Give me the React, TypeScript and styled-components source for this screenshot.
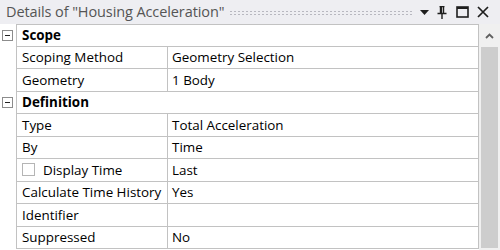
import React from "react";
import styled, { createGlobalStyle } from "styled-components";

const Global = createGlobalStyle`
  html, body { margin: 0; padding: 0; background: #ffffff; }
  body { font-family: "Open Sans", "Liberation Sans", sans-serif; }
`;

const Panel = styled.div`
  width: 500px;
  height: 250px;
  display: flex;
  flex-direction: column;
  background: #ffffff;
  overflow: hidden;
`;

const TitleBar = styled.div`
  height: 24px;
  flex: none;
  display: flex;
  align-items: center;
  background: #eeeef2;
  padding: 0 10px 0 6px;
  gap: 3px;
`;

const Title = styled.span`
  font-size: 14.5px;
  color: #555555;
  white-space: nowrap;
  letter-spacing: -0.1px;
  margin-top: -1px;
`;

const Grip = styled.div`
  flex: 1;
  height: 5px;
  margin: 0 3px 0 2px;
  background-image: radial-gradient(circle, #b8b8c0 0.7px, transparent 0.8px);
  background-size: 4px 3px;
`;

const TitleIcons = styled.div`
  display: flex;
  align-items: center;
  gap: 7px;
`;

const IconBox = styled.div<{ $w: number }>`
  width: ${(p) => p.$w}px;
  height: 14px;
  display: flex;
  align-items: center;
  justify-content: center;
`;

const Body = styled.div`
  flex: 1;
  display: flex;
  min-height: 0;
`;

const Table = styled.div`
  width: 479px;
  display: flex;
  flex-direction: column;
`;

const Row = styled.div`
  display: grid;
  grid-template-columns: 16px 151px 1fr;
  height: 22.5px;
`;

const Gutter = styled.div`
  display: flex;
  align-items: center;
  justify-content: center;
  padding-right: 1px;
`;

const Toggle = styled.div`
  width: 9px;
  height: 9px;
  border: 1px solid #8c8c8c;
  background: #ffffff;
  position: relative;
  &::after {
    content: "";
    position: absolute;
    left: 2px;
    right: 2px;
    top: 4px;
    height: 1px;
    background: #222;
  }
`;

const Cell = styled.div<{ $span?: boolean; $first?: boolean; $top?: boolean }>`
  grid-column: ${(p) => (p.$span ? "2 / 4" : "auto")};
  display: flex;
  align-items: center;
  gap: 8px;
  box-sizing: border-box;
  border-bottom: 1px solid #c2c2c2;
  border-top: ${(p) => (p.$top ? "1px solid #c2c2c2" : "none")};
  border-left: 1px solid #c2c2c2;
  border-right: ${(p) => (p.$first ? "none" : "1px solid #c2c2c2")};
  padding-left: ${(p) => (p.$first || p.$span ? "5px" : "4px")};
  font-size: 13.4px;
  font-weight: ${(p) => (p.$span ? 700 : 400)};
  color: #000;
  white-space: nowrap;
  overflow: hidden;
`;

const Check = styled.span`
  width: 13px;
  height: 13px;
  box-sizing: border-box;
  border: 1px solid #b5b5b5;
  background: #fff;
  flex: none;
`;

const Scrollbar = styled.div`
  width: 21px;
  background: #f0f0f0;
  display: flex;
  flex-direction: column;
  align-items: center;
`;

const ArrowBtn = styled.div`
  height: 23px;
  width: 100%;
  display: flex;
  align-items: center;
  justify-content: center;
`;

const Thumb = styled.div`
  width: 17px;
  flex: 1;
  background: #cdcdcd;
  margin-bottom: 2px;
`;

type Item =
  | { kind: "header"; label: string }
  | { kind: "prop"; name: string; value: string; check?: boolean };

const items: Item[] = [
  { kind: "header", label: "Scope" },
  { kind: "prop", name: "Scoping Method", value: "Geometry Selection" },
  { kind: "prop", name: "Geometry", value: "1 Body" },
  { kind: "header", label: "Definition" },
  { kind: "prop", name: "Type", value: "Total Acceleration" },
  { kind: "prop", name: "By", value: "Time" },
  { kind: "prop", name: "Display Time", value: "Last", check: true },
  { kind: "prop", name: "Calculate Time History", value: "Yes" },
  { kind: "prop", name: "Identifier", value: "" },
  { kind: "prop", name: "Suppressed", value: "No" },
];

export default function App() {
  return (
    <>
      <Global />
      <Panel>
        <TitleBar>
          <Title>Details of "Housing Acceleration"</Title>
          <Grip />
          <TitleIcons>
            <IconBox $w={10}>
              <svg width="9" height="5" viewBox="0 0 9 5">
                <path d="M0 0 H9 L4.5 5 Z" fill="#1e1e1e" />
              </svg>
            </IconBox>
            <IconBox $w={12}>
              <svg width="10" height="13" viewBox="0 0 10 13">
                <path
                  d="M2.5 0.5 H7.5 M3.5 0.5 V7 M6.5 0.5 V7 M0.5 7.5 H9.5 M5 7.5 V13"
                  stroke="#1e1e1e"
                  strokeWidth="1.4"
                  fill="none"
                />
                <rect x="3.5" y="1" width="1.6" height="6" fill="#1e1e1e" />
              </svg>
            </IconBox>
            <IconBox $w={14}>
              <svg width="13" height="12" viewBox="0 0 13 12">
                <rect x="1" y="1" width="11" height="10" stroke="#1e1e1e" strokeWidth="1.6" fill="none" />
                <rect x="1" y="1" width="11" height="2" fill="#1e1e1e" />
              </svg>
            </IconBox>
            <IconBox $w={14}>
              <svg width="12" height="12" viewBox="0 0 12 12">
                <path d="M1 1 L11 11 M11 1 L1 11" stroke="#1e1e1e" strokeWidth="1.7" />
              </svg>
            </IconBox>
          </TitleIcons>
        </TitleBar>
        <Body>
          <Table>
            {items.map((it, i) =>
              it.kind === "header" ? (
                <Row key={i}>
                  <Gutter>
                    <Toggle />
                  </Gutter>
                  <Cell $span $top={i === 0}>
                    {it.label}
                  </Cell>
                </Row>
              ) : (
                <Row key={i}>
                  <Gutter />
                  <Cell $first>
                    {it.check && <Check />}
                    {it.name}
                  </Cell>
                  <Cell>{it.value}</Cell>
                </Row>
              )
            )}
          </Table>
          <Scrollbar>
            <ArrowBtn>
              <svg width="9" height="6" viewBox="0 0 9 6">
                <path d="M1 5 L4.5 1.5 L8 5" stroke="#606060" strokeWidth="1.8" fill="none" />
              </svg>
            </ArrowBtn>
            <Thumb />
          </Scrollbar>
        </Body>
      </Panel>
    </>
  );
}
